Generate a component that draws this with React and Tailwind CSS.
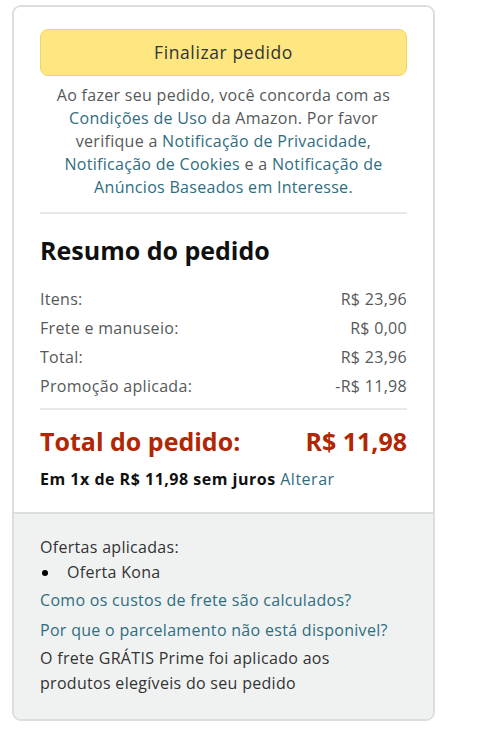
import React from 'react';

const rows = [
  ['Itens:', 'R$ 23,96'],
  ['Frete e manuseio:', 'R$ 0,00'],
  ['Total:', 'R$ 23,96'],
  ['Promoção aplicada:', '-R$ 11,98'],
];

export default function App() {
  return (
    <div className="min-h-[753px] bg-white pt-[5px] pl-[12px]" style={{ fontFamily: '"Open Sans", Arial, sans-serif' }}>
      <div className="w-[423px] overflow-hidden rounded-[9px] border-2 border-[#dcdede]">
        {/* resumo */}
        <div className="bg-white px-[26px] pt-[22px] pb-[23px]">
          <button className="flex h-[47px] w-full items-center justify-center rounded-[8px] border border-[#f2d56a] bg-[#fee681] text-[17.5px] tracking-[0.6px] text-[#333]">
            Finalizar pedido
          </button>
          <p className="mt-[8px] px-[8px] text-center text-[16px] leading-[23px] tracking-[0.3px] text-[#565959]">
            Ao fazer seu pedido, você concorda com as{' '}
            <span className="text-[#2f6d80]">Condições de Uso</span> da Amazon. Por favor verifique a{' '}
            <span className="text-[#2f6d80]">Notificação de Privacidade</span>,{' '}
            <span className="text-[#2f6d80]">Notificação de Cookies</span> e a{' '}
            <span className="text-[#2f6d80]">Notificação de Anúncios Baseados em Interesse</span>.
          </p>
          <div className="mt-[13px] border-t-2 border-[#e7e9e9]" />
          <h2 className="mt-[20px] text-[25px] font-bold leading-[32px] text-[#0f1111]">Resumo do pedido</h2>
          <div className="mt-[22px] flex flex-col gap-[7px]">
            {rows.map(([k, v]) => (
              <div key={k} className="flex justify-between text-[16px] leading-[22px] tracking-[0.3px] text-[#565959]">
                <span>{k}</span>
                <span>{v}</span>
              </div>
            ))}
          </div>
          <div className="mt-[11px] border-t-2 border-[#e7e9e9]" />
          <div className="mt-[14px] flex justify-between text-[25px] font-bold leading-[34px] text-[#b12704]">
            <span>Total do pedido:</span>
            <span>R$ 11,98</span>
          </div>
          <p className="mt-[11px] text-[16px] leading-[20px] tracking-[0.5px] text-[#0f1111]">
            <span className="font-bold">Em 1x de R$ 11,98 sem juros</span>{' '}
            <span className="text-[#2f6d80]">Alterar</span>
          </p>
        </div>
        {/* ofertas */}
        <div className="border-t-2 border-[#dcdede] bg-[#f0f2f2] px-[26px] pt-[21px] pb-[23px] text-[16px] leading-[25px] tracking-[0.3px] text-[#333]">
          <p>Ofertas aplicadas:</p>
          <div className="flex items-center">
            <span className="ml-[2px] h-[6px] w-[6px] rounded-full bg-black" />
            <span className="ml-[19px]">Oferta Kona</span>
          </div>
          <p className="mt-[3px] text-[#2f6d80]">Como os custos de frete são calculados?</p>
          <p className="mt-[5px] text-[#2f6d80]">Por que o parcelamento não está disponivel?</p>
          <p className="mt-[3px] max-w-[320px]">O frete GRÁTIS Prime foi aplicado aos produtos elegíveis do seu pedido</p>
        </div>
      </div>
    </div>
  );
}
